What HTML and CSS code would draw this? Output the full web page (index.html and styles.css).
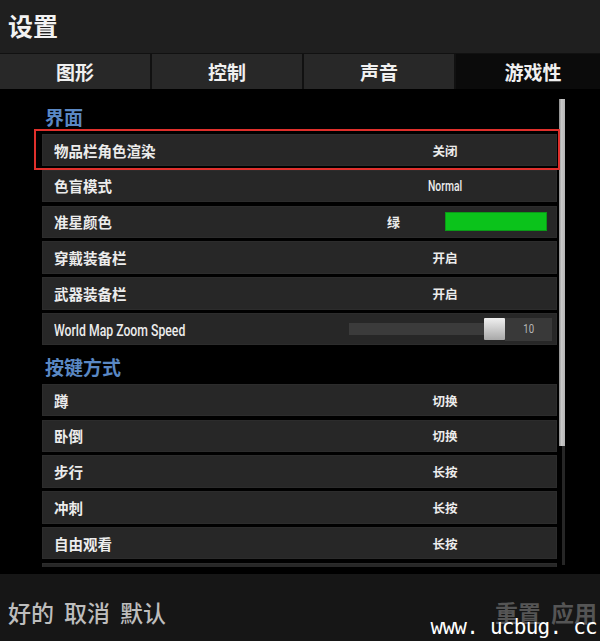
FILE: index.html
```html
<!DOCTYPE html>
<html lang="zh-CN">
<head>
<meta charset="utf-8">
<title>设置</title>
<link rel="stylesheet" href="styles.css">
</head>
<body>
<div class="app">
  <header class="header"><h1 class="title">设置</h1></header>
  <nav class="tabs">
    <div class="tab">图形</div>
    <div class="tab">控制</div>
    <div class="tab">声音</div>
    <div class="tab tab-active">游戏性</div>
  </nav>
  <main class="content">
    <div class="viewport">
      <div class="list">
        <h2 class="section">界面</h2>
        <div class="row row-highlight"><span class="label">物品栏角色渲染</span><span class="value">关闭</span></div>
        <div class="row"><span class="label">色盲模式</span><span class="value"><span class="narrow">Normal</span></span></div>
        <div class="row"><span class="label">准星颜色</span><span class="color-name">绿</span><span class="swatch"></span></div>
        <div class="row"><span class="label">穿戴装备栏</span><span class="value">开启</span></div>
        <div class="row"><span class="label">武器装备栏</span><span class="value">开启</span></div>
        <div class="row"><span class="label"><span class="latin">World Map Zoom Speed</span></span><span class="track"></span><span class="thumb"></span><span class="numbox"><span class="num">10</span></span></div>
        <h2 class="section section-2">按键方式</h2>
        <div class="row"><span class="label">蹲</span><span class="value">切换</span></div>
        <div class="row"><span class="label">卧倒</span><span class="value">切换</span></div>
        <div class="row"><span class="label">步行</span><span class="value">长按</span></div>
        <div class="row"><span class="label">冲刺</span><span class="value">长按</span></div>
        <div class="row"><span class="label">自由观看</span><span class="value">长按</span></div>
        <div class="row"></div>
      </div>
      <div class="scrollbar"><div class="scroll-thumb"></div><div class="scroll-track"></div></div>
    </div>
  </main>
  <footer class="footer">
    <div class="actions">
      <span class="action">好的</span>
      <span class="action">取消</span>
      <span class="action">默认</span>
    </div>
    <div class="actions actions-dim">
      <span class="action">重置</span>
      <span class="action">应用</span>
    </div>
    <span class="watermark">www. ucbug. cc</span>
  </footer>
</div>
</body>
</html>
```
FILE: styles.css
```css
* { box-sizing: border-box; }
html, body { margin: 0; padding: 0; background: #000; }
body {
  width: 600px;
  height: 641px;
  overflow: hidden;
  font-family: "Noto Sans CJK SC", "Noto Sans", sans-serif;
  color: #e8e8e8;
}
.app { display: flex; flex-direction: column; height: 641px; }

.header {
  height: 54px;
  background: #1f1f1f;
  border-bottom: 1px solid #111;
  display: flex;
  align-items: center;
  padding: 0 0 2px 8px;
}
.title { margin: 0; font-size: 25px; font-weight: 700; color: #f2f2f2; line-height: 1; }

.tabs {
  height: 35px;
  display: flex;
  gap: 2px;
  background: #111;
}
.tab {
  width: 150px;
  background: #282828;
  display: flex;
  align-items: center;
  justify-content: center;
  font-size: 19px;
  font-weight: 700;
  color: #f0f0f0;
}
.tab-active { flex: 1; background: #0b0b0b; padding-left: 10px; }

.content { height: 485px; background: #000; }
.viewport { height: 478px; overflow: hidden; display: flex; align-items: flex-start; }
.list { width: 515px; margin-left: 42px; padding-top: 10px; }

.section {
  margin: 0;
  height: 35px;
  line-height: 35px;
  padding-left: 3px;
  font-size: 19px;
  font-weight: 700;
  color: #5a88c4;
}
.section-2 { height: 35.2px; line-height: 35.2px; }

.row {
  position: relative;
  height: 32.4px;
  margin-bottom: 3.4px;
  background: #272727;
  border: 1px solid #2c2c2c;
  display: flex;
  align-items: center;
  padding-left: 11px;
}
.row-highlight::after {
  content: "";
  position: absolute;
  top: -6px;
  left: -9px;
  right: -4px;
  bottom: -5px;
  border: 2px solid #e0302c;
}
.label { flex: 1; font-size: 14.5px; font-weight: 700; color: #ececec; white-space: nowrap; }
.value {
  width: 100px;
  margin-right: 61px;
  text-align: center;
  font-size: 12.5px;
  font-weight: 700;
  color: #ececec;
}
.narrow {
  display: inline-block;
  font-family: Roboto, "Liberation Sans", sans-serif;
  font-size: 14px;
  font-weight: 500;
  transform: scaleX(0.74);
}
.latin {
  display: inline-block;
  font-family: Roboto, "Liberation Sans", sans-serif;
  font-size: 17px;
  font-weight: 500;
  transform: scaleX(0.72);
  transform-origin: left center;
}
.color-name { font-size: 13px; font-weight: 700; color: #ececec; }
.swatch {
  width: 102px;
  height: 19px;
  margin-left: 45px;
  margin-right: 9px;
  background: #0bc31b;
  border: 1px solid #0a9a17;
}
.track { width: 135px; height: 12px; background: #3b3b3b; }
.thumb {
  width: 21px;
  height: 22px;
  background: linear-gradient(#f0f0f0, #a8a8a8);
  border-radius: 1px;
}
.numbox {
  width: 47px;
  height: 23px;
  margin-right: 4px;
  background: #393939;
  display: flex;
  align-items: center;
  justify-content: center;
}
.num {
  display: inline-block;
  font-family: Roboto, "Liberation Sans", sans-serif;
  font-size: 12px;
  color: #b8b8b8;
  transform: scaleX(0.8);
}

.scrollbar {
  width: 6px;
  margin-left: 2px;
  margin-top: 10px;
  height: 466px;
  display: flex;
  flex-direction: column;
  align-items: flex-end;
}
.scroll-thumb {
  width: 6px;
  height: 347px;
  background: linear-gradient(90deg, #8a8a8a, #c8c8c8 40%, #b4b4b4);
}
.scroll-track { width: 3px; flex: 1; background: #262626; }

.footer {
  position: relative;
  flex: 1;
  background: #161616;
  display: flex;
  align-items: center;
  justify-content: space-between;
  padding: 9px 3px 0 8px;
}
.actions { display: flex; gap: 10px; }
.action { font-size: 23px; font-weight: 500; color: #bdbdbd; line-height: 1; }
.actions-dim .action { color: #555; font-weight: 700; }
.watermark {
  position: absolute;
  right: 3px;
  bottom: 3px;
  font-family: "DejaVu Sans Mono", "Liberation Mono", monospace;
  font-size: 21px;
  letter-spacing: -0.75px;
  color: #fff;
  line-height: 1;
}
```
